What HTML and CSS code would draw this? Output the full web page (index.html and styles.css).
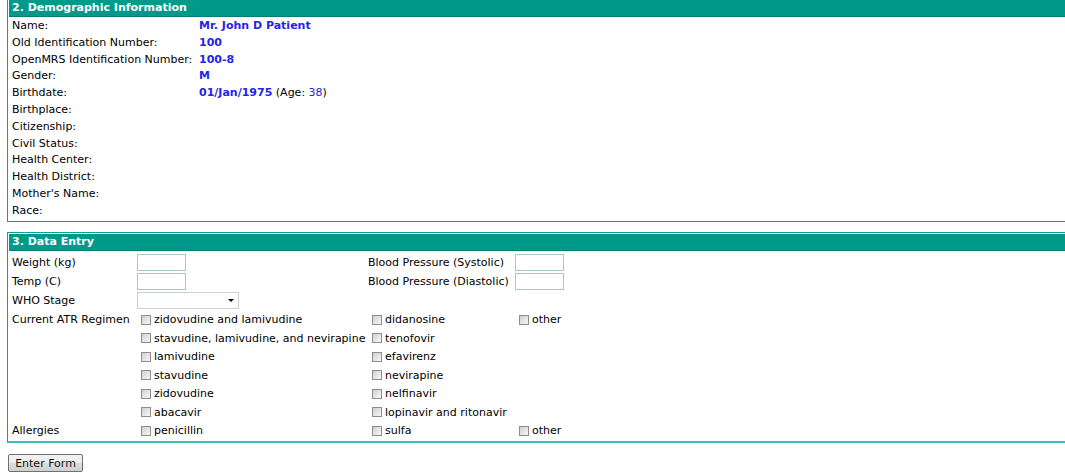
FILE: index.html
```html
<!DOCTYPE html>
<html>
<head>
<meta charset="utf-8">
<title>Patient Form</title>
<link rel="stylesheet" href="styles.css">
</head>
<body>
<div class="section demo">
  <div class="section-head">2. Demographic Information</div>
  <div class="demo-grid">
    <div class="lbl">Name:</div><div class="val"><b>Mr. John D Patient</b></div>
    <div class="lbl">Old Identification Number:</div><div class="val"><b>100</b></div>
    <div class="lbl">OpenMRS Identification Number:</div><div class="val"><b>100-8</b></div>
    <div class="lbl">Gender:</div><div class="val"><b>M</b></div>
    <div class="lbl">Birthdate:</div><div class="val"><b>01/Jan/1975</b> <span class="plain">(Age: <span class="num">38</span>)</span></div>
    <div class="lbl">Birthplace:</div><div class="val"></div>
    <div class="lbl">Citizenship:</div><div class="val"></div>
    <div class="lbl">Civil Status:</div><div class="val"></div>
    <div class="lbl">Health Center:</div><div class="val"></div>
    <div class="lbl">Health District:</div><div class="val"></div>
    <div class="lbl">Mother's Name:</div><div class="val"></div>
    <div class="lbl">Race:</div><div class="val"></div>
  </div>
</div>

<div class="section entry">
  <div class="section-head">3. Data Entry</div>
  <div class="entry-grid">
    <div class="cell row-in">Weight (kg)</div>
    <div class="cell row-in"><input class="txt" type="text"></div>
    <div class="cell row-in">Blood Pressure (Systolic)</div>
    <div class="cell row-in"><input class="txt" type="text"></div>

    <div class="cell row-in">Temp (C)</div>
    <div class="cell row-in"><input class="txt" type="text"></div>
    <div class="cell row-in">Blood Pressure (Diastolic)</div>
    <div class="cell row-in"><input class="txt" type="text"></div>

    <div class="cell row-sel">WHO Stage</div>
    <div class="cell row-sel"><span class="sel"><span class="arrow"></span></span></div>
    <div class="cell row-sel"></div>
    <div class="cell row-sel"></div>

    <div class="cell row-cb">Current ATR Regimen</div>
    <label class="cell row-cb cb"><input type="checkbox">zidovudine and lamivudine</label>
    <label class="cell row-cb cb"><input type="checkbox">didanosine</label>
    <label class="cell row-cb cb"><input type="checkbox">other</label>

    <div class="cell row-cb"></div>
    <label class="cell row-cb cb"><input type="checkbox">stavudine, lamivudine, and nevirapine</label>
    <label class="cell row-cb cb"><input type="checkbox">tenofovir</label>
    <div class="cell row-cb"></div>

    <div class="cell row-cb"></div>
    <label class="cell row-cb cb"><input type="checkbox">lamivudine</label>
    <label class="cell row-cb cb"><input type="checkbox">efavirenz</label>
    <div class="cell row-cb"></div>

    <div class="cell row-cb"></div>
    <label class="cell row-cb cb"><input type="checkbox">stavudine</label>
    <label class="cell row-cb cb"><input type="checkbox">nevirapine</label>
    <div class="cell row-cb"></div>

    <div class="cell row-cb"></div>
    <label class="cell row-cb cb"><input type="checkbox">zidovudine</label>
    <label class="cell row-cb cb"><input type="checkbox">nelfinavir</label>
    <div class="cell row-cb"></div>

    <div class="cell row-cb"></div>
    <label class="cell row-cb cb"><input type="checkbox">abacavir</label>
    <label class="cell row-cb cb"><input type="checkbox">lopinavir and ritonavir</label>
    <div class="cell row-cb"></div>

    <div class="cell row-cb">Allergies</div>
    <label class="cell row-cb cb"><input type="checkbox">penicillin</label>
    <label class="cell row-cb cb"><input type="checkbox">sulfa</label>
    <label class="cell row-cb cb"><input type="checkbox">other</label>
  </div>
</div>

<div class="actions">
  <button class="btn" type="button">Enter Form</button>
</div>
</body>
</html>
```

FILE: styles.css
```css
html, body {
  overflow: hidden;
}
body {
  margin: 0;
  padding: 0 0 0 7px;
  font-family: "DejaVu Sans", Verdana, sans-serif;
  font-size: 11px;
  color: #000;
  background: #fff;
}
.section {
  border: 1px solid #129e90;
  margin-right: -20px;
  padding: 1px;
}
.demo {
  margin-top: -2px;
}
.entry {
  margin-top: 10px;
  border-bottom: 2px solid #3fbfb1;
}
.section-head {
  background: #009a8a;
  border-bottom: 1px solid #007f70;
  color: #fff;
  font-weight: bold;
  height: 16px;
  line-height: 16px;
  padding-left: 3px;
}
.demo-grid {
  display: grid;
  grid-template-columns: 187px 1fr;
  padding: 1px 0 0 3px;
}
.demo-grid .lbl,
.demo-grid .val {
  line-height: 16.8px;
  white-space: nowrap;
}
.val b {
  color: #2424ea;
}
.val .plain {
  color: #000;
}
.val .num {
  color: #2424ea;
}
.entry-grid {
  display: grid;
  grid-template-columns: 125px 231px 147px 1fr;
  padding: 2px 0 0 3px;
}
.cell {
  display: flex;
  align-items: center;
  white-space: nowrap;
}
.row-in {
  height: 19px;
}
.row-sel {
  height: 20px;
}
.row-cb {
  height: 18.5px;
}
.txt {
  box-sizing: border-box;
  width: 49px;
  height: 17px;
  margin: 0;
  padding: 0 2px;
  border: 1px solid #a4c9c8;
  background: #fff;
  font: inherit;
}
.sel {
  box-sizing: border-box;
  position: relative;
  display: block;
  width: 102px;
  height: 17px;
  border: 1px solid #cfcfcf;
  background: #fff;
}
.arrow {
  position: absolute;
  right: 4px;
  top: 6px;
  width: 0;
  height: 0;
  border-left: 3px solid transparent;
  border-right: 3px solid transparent;
  border-top: 3px solid #000;
}
.cb input {
  -webkit-appearance: none;
  appearance: none;
  box-sizing: border-box;
  width: 10px;
  height: 10px;
  margin: 0 3px 0 4px;
  border: 1px solid #8e8e8e;
  background: linear-gradient(135deg, #cfcfcf 0%, #e6e6e6 55%, #f6f6f6 100%);
  flex: none;
}
.actions {
  margin-top: 11px;
  padding-left: 1px;
}
.btn {
  box-sizing: border-box;
  width: 75px;
  height: 18px;
  padding: 0;
  border: 1px solid #707070;
  border-radius: 2px;
  background: linear-gradient(#f2f2f2 0%, #ebebeb 50%, #dddddd 51%, #cfcfcf 100%);
  font-family: "DejaVu Sans", Verdana, sans-serif;
  font-size: 11px;
  color: #111;
}
```
